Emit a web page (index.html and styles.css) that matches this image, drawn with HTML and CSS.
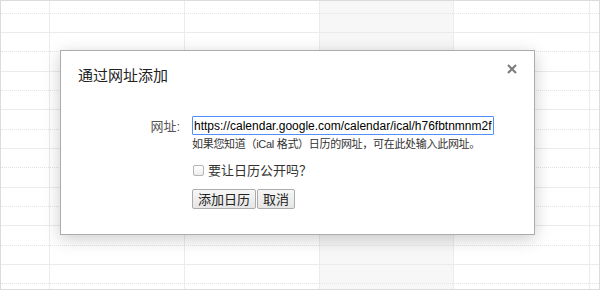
FILE: index.html
```html
<!DOCTYPE html>
<html lang="zh-CN">
<head>
    <meta charset="UTF-8">
    <meta name="viewport" content="width=device-width, initial-scale=1.0">
    <title>通过网址添加</title>
    <link rel="stylesheet" href="styles.css">
</head>
<body>
    <div class="calendar">
        <div class="rows">
            <div class="row"><div class="half"></div></div>
            <div class="row"><div class="half"></div></div>
            <div class="row"><div class="half"></div></div>
            <div class="row"><div class="half"></div></div>
            <div class="row"><div class="half"></div></div>
            <div class="row"><div class="half"></div></div>
            <div class="row"><div class="half"></div></div>
            <div class="row"><div class="half"></div></div>
        </div>
    </div>

    <div class="dialog">
        <h2 class="dialog-title">通过网址添加</h2>
        <button class="close-btn" aria-label="关闭">
            <svg width="10" height="10" viewBox="0 0 10 10">
                <path d="M1 1L9 9M9 1L1 9" stroke="#7a7a7a" stroke-width="2"/>
            </svg>
        </button>

        <div class="form">
            <label class="form-label" for="url">网址:</label>
            <input type="text" id="url" class="url-input" value="https://calendar.google.com/calendar/ical/h76fbtnmnm2f5v0k6ptjb4c0a8%40group.calendar.google.com/public/basic.ics">

            <div></div>
            <div class="field">
                <div class="hint">如果您知道（iCal 格式）日历的网址，可在此处输入此网址。</div>
                <label class="check-row"><input type="checkbox" class="check"> 要让日历公开吗？</label>
                <div class="actions">
                    <button class="btn">添加日历</button>
                    <button class="btn">取消</button>
                </div>
            </div>
        </div>
    </div>
</body>
</html>
```

FILE: styles.css
```css
body{
    margin: 0;
    width: 600px;
    height: 290px;
    overflow: hidden;
    font-family: "Liberation Sans", Arial, "Noto Sans CJK SC", sans-serif;
    color: #222;
}
.calendar{
    height: 290px;
    box-sizing: border-box;
    border: 1px solid #dcdcdc;
    overflow: hidden;
    background-image: linear-gradient(to right,
        transparent 48px, #ececec 48px 49px,
        transparent 49px 183px, #ececec 183px 184px,
        transparent 184px 318px, #ececec 318px 319px,
        #f7f7f7 319px 452px, #ececec 452px 453px,
        transparent 453px 588px, #ececec 588px 589px,
        transparent 589px);
}
.rows{
    margin-top: -6.67px;
}
.row{
    height: 38.67px;
    box-sizing: border-box;
    border-bottom: 1px solid #ebebeb;
}
.half{
    height: 19.33px;
    box-sizing: border-box;
    border-bottom: 1px dotted #e4e4e4;
}

/* dialog */
.dialog{
    position: absolute;
    left: 60px;
    top: 50px;
    width: 475px;
    height: 185px;
    box-sizing: border-box;
    padding: 15px 17px;
    background: #fff;
    border: 1px solid #acacac;
    box-shadow: 0 4px 16px rgba(0,0,0,.2);
}
.dialog-title{
    margin: 0;
    font-size: 15px;
    font-weight: normal;
    line-height: 20px;
    color: #222;
}
.close-btn{
    position: absolute;
    top: 13px;
    right: 17px;
    padding: 0;
    border: none;
    background: none;
    width: 10px;
    height: 10px;
    display: flex;
}
.form{
    display: grid;
    grid-template-columns: 106px 1fr;
    column-gap: 8px;
    align-items: center;
    margin-top: 30px;
}
.form-label{
    text-align: right;
    padding-right: 4px;
    font-size: 13px;
    color: #555;
}
.url-input{
    width: 302px;
    height: 19px;
    box-sizing: border-box;
    padding: 0 1px;
    border: 1px solid #4d90fe;
    border-radius: 1px;
    font-family: "Liberation Sans", Arial, sans-serif;
    font-size: 12px;
    color: #000;
    outline: none;
}
.field{
    display: flex;
    flex-direction: column;
    align-items: flex-start;
}
.hint{
    margin-top: 1px;
    font-size: 11px;
    letter-spacing: -0.3px;
    line-height: 16px;
    color: #333;
}
.check-row{
    display: flex;
    align-items: center;
    gap: 4px;
    margin-top: 9px;
    font-family: "Noto Sans CJK SC", sans-serif;
    font-size: 13px;
    line-height: 18px;
    color: #333;
}
.check{
    appearance: none;
    width: 11px;
    height: 11px;
    margin: 0 0 0 1px;
    border: 1px solid #b5b5b5;
    border-radius: 2px;
    background: linear-gradient(#fff, #ededed);
}
.actions{
    display: flex;
    gap: 1px;
    margin-top: 10px;
}
.btn{
    height: 20px;
    padding: 0 5px;
    border: 1px solid #acacac;
    border-radius: 2px;
    background: linear-gradient(#f6f6f6, #e6e6e6);
    font-family: "Noto Sans CJK SC", sans-serif;
    font-size: 13px;
    line-height: 18px;
    color: #222;
}
```
